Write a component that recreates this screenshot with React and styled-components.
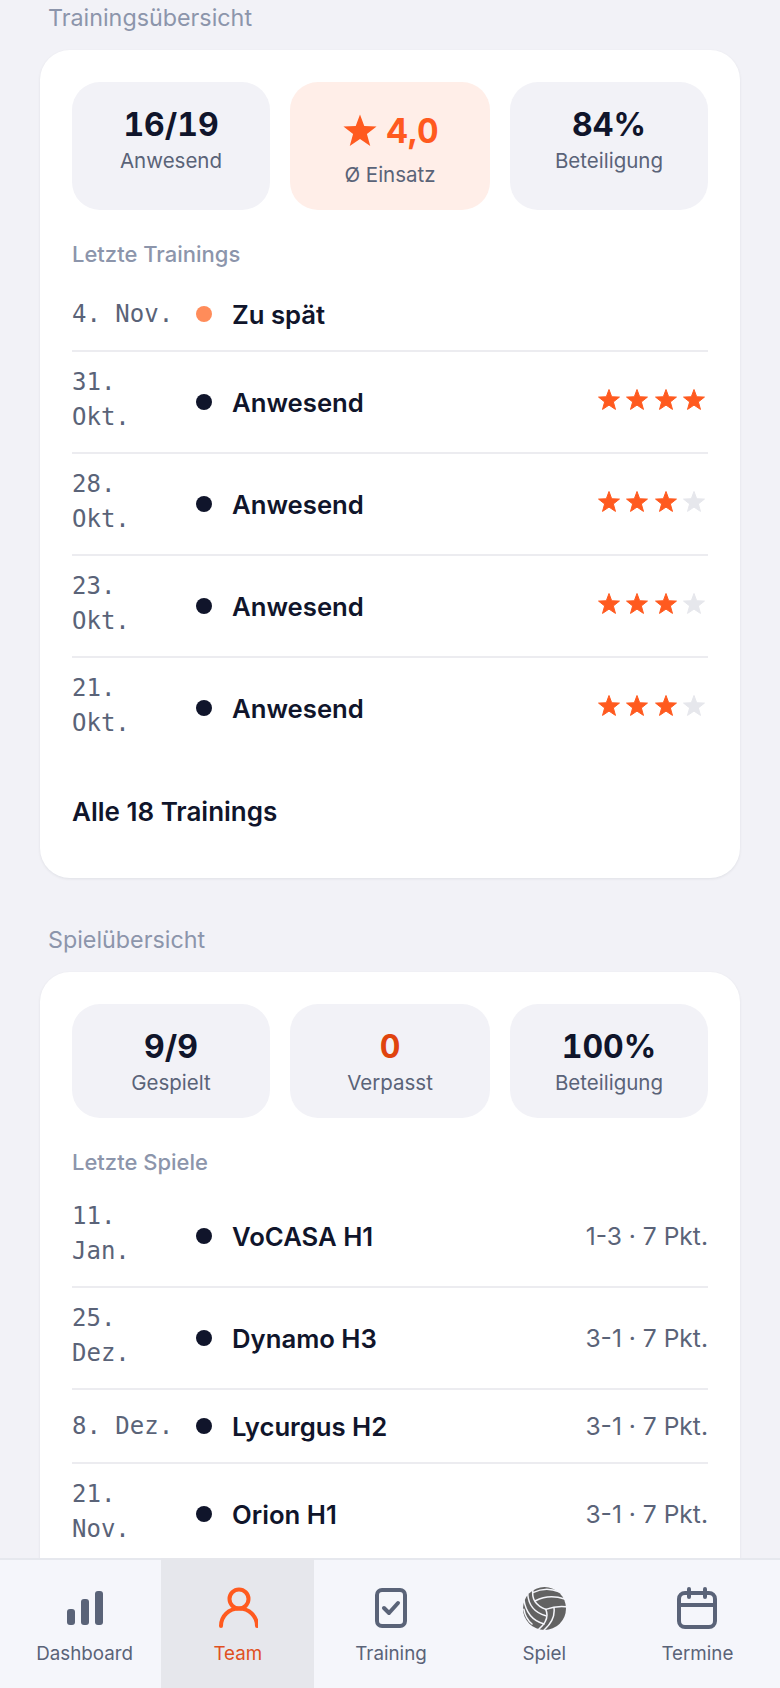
import React from 'react';
import styled, { createGlobalStyle } from 'styled-components';

const GlobalStyle = createGlobalStyle`
    html, body {
        margin: 0;
        padding: 0;
        background: #f2f2f7;
        font-family: "Inter", "Liberation Sans", sans-serif;
    }
    * { box-sizing: border-box; }
`

const Page = styled.div`
    width: 780px;
    height: 1688px;
    display: flex;
    flex-direction: column;
    overflow: hidden;
    background: #f2f2f7;
`

const Content = styled.main`
    flex: 1;
    min-height: 0;
    overflow: hidden;
    padding: 3px 40px 0;
`

const SectionTitle = styled.h2`
    margin: 0 0 17px 8px;
    font-size: 23.3px;
    line-height: 30px;
    font-weight: 400;
    color: #8c95ab;
`

const Card = styled.section`
    background: #fff;
    border-radius: 30px;
    padding: 32px;
    margin-bottom: 47px;
    box-shadow: 0 1px 3px rgba(16, 21, 43, 0.08);
`

const Stats = styled.div`
    display: grid;
    grid-template-columns: 198px 200px 198px;
    justify-content: space-between;
`

const StatBox = styled.div`
    display: flex;
    flex-direction: column;
    align-items: center;
    padding: 20px 8px;
    border-radius: 28px;
    background: ${p => (p.$accent ? '#ffeee8' : '#f2f2f7')};
`

const StatValue = styled.div`
    display: flex;
    align-items: center;
    justify-content: center;
    gap: 7px;
    height: ${p => (p.$tall ? '58px' : '44px')};
    font-size: ${p => (p.$tall ? '33.5px' : '32px')};
    font-weight: 700;
    font-variant-numeric: tabular-nums;
    color: ${p => p.$color || '#10152b'};
`

const StatLabel = styled.div`
    font-size: 20.5px;
    line-height: 30px;
    color: #5a6378;
`

const ListTitle = styled.h3`
    margin: 30px 0 10px;
    font-size: 22px;
    line-height: 28px;
    font-weight: 500;
    color: #8c95ab;
`

const Row = styled.div`
    display: flex;
    align-items: center;
    padding: 16px 0 17px;
    min-height: 74px;
    border-bottom: ${p => (p.$last ? 'none' : '2px solid #ececf0')};
`

const DateText = styled.div`
    width: 104px;
    flex-shrink: 0;
    margin-top: ${p => (p.$oneLine ? '1px' : '-3px')};
    font-family: "DejaVu Sans Mono", monospace;
    font-size: 24px;
    line-height: 35px;
    color: #5a6378;
`

const Dot = styled.span`
    width: 16px;
    height: 16px;
    margin: 0 20px;
    flex-shrink: 0;
    border-radius: 50%;
    background: ${p => p.$color};
`

const Name = styled.div`
    flex: 1;
    margin-top: 3px;
    font-size: 25.7px;
    line-height: 36px;
    font-weight: 600;
    color: #10152b;
`

const Result = styled.div`
    font-size: 24.6px;
    color: #5a6378;
`

const Stars = styled.div`
    display: flex;
    gap: 4.3px;
    margin-top: -4px;
    margin-right: 2px;
`

const AllLink = styled.a`
    display: block;
    padding: 36px 0 16px;
    font-size: 26px;
    line-height: 36px;
    font-weight: 600;
    color: #10152b;
`

const Nav = styled.nav`
    flex-shrink: 0;
    height: 130px;
    display: flex;
    padding: 0 6px;
    background: #f5f6fb;
    border-top: 2px solid #e6e8ee;
`

const NavItem = styled.div`
    flex: 1;
    display: flex;
    flex-direction: column;
    align-items: center;
    margin-top: ${p => (p.$active ? '-2px' : '0')};
    padding-top: ${p => (p.$active ? '28px' : '26px')};
    background: ${p => (p.$active ? '#e6e7ec' : 'transparent')};
    color: ${p => (p.$active ? '#e0501f' : '#5a6378')};

    &:first-child {
        padding-left: 2px;
    }
`

const NavIcon = styled.div`
    height: 44px;
    display: flex;
    align-items: center;
    justify-content: center;
`

const NavLabel = styled.span`
    margin-top: 11px;
    font-size: 18.8px;
    line-height: 26px;
`

const ORANGE = '#ff5a1f';

const STAR_POINTS = '12,1.5 14.7,8.78 22.46,9.1 16.37,13.92 18.47,21.4 12,17.1 5.53,21.4 7.63,13.92 1.54,9.1 9.3,8.78';

const StarIcon = ({ size, color, rounded }) => (
    <svg width={size} height={size} viewBox="0 0 24 24">
        <polygon points={STAR_POINTS} fill={color} stroke={rounded ? color : 'none'} strokeWidth="1" strokeLinejoin="round" />
    </svg>
);

function StarRating({ value }) {
    return (
        <Stars>
            {[1, 2, 3, 4].map(i => (
                <StarIcon key={i} size={24} rounded color={i <= value ? ORANGE : '#e6e7ec'} />
            ))}
        </Stars>
    );
}

const DashboardIcon = () => (
    <svg width="36" height="34" viewBox="0 0 36 34" fill="#5a6378">
        <rect x="0" y="18" width="8" height="16" rx="3" />
        <rect x="14" y="8" width="8" height="26" rx="3" />
        <rect x="28" y="0" width="8" height="34" rx="3" />
    </svg>
);

const TeamIcon = () => (
    <svg width="40" height="42" viewBox="-1 0 40 42" fill="none" stroke={ORANGE} strokeWidth="4" strokeLinecap="round">
        <circle cx="20" cy="12" r="9.500" />
        <path d="M2 39c0-10 8-17.500 18-17.500S38 29 38 39" />
    </svg>
);

const TrainingIcon = () => (
    <svg width="32" height="40" viewBox="0 0 32 40" fill="none" stroke="#5a6378" strokeWidth="4" strokeLinecap="round" strokeLinejoin="round">
        <rect x="2" y="2" width="28" height="36" rx="5" />
        <path d="M9 20l5 5 9-10" />
    </svg>
);

const BallIcon = () => (
    <svg width="43" height="43" viewBox="0 0 100 100" fill="none">
        <circle cx="50" cy="50" r="50" fill="#626262" />
        <g stroke="#f5f6fb" strokeWidth="3.5" strokeLinecap="round">
            <path d="M23 7Q18 38 53 52" />
            <path d="M23 13Q53 -2 84 11" />
            <path d="M29 32Q60 16 97 28" />
            <path d="M2 28Q8 74 49 86" />
            <path d="M2 52Q6 74 21 86" />
            <path d="M11 17Q14 56 53 67" />
            <path d="M53 52Q63 76 37 98" />
            <path d="M72 48Q76 76 49 100" />
            <path d="M53 52Q76 44 99 46" />
        </g>
    </svg>
);

const CalendarIcon = () => (
    <svg width="40" height="42" viewBox="0 0 40 42" fill="none" stroke="#5a6378" strokeWidth="4" strokeLinecap="round" strokeLinejoin="round">
        <rect x="2" y="6" width="36" height="34" rx="6" />
        <path d="M2 18h36M12 2v8M28 2v8" />
    </svg>
);

const trainings = [
    { date: '31. Okt.', stars: 4 },
    { date: '28. Okt.', stars: 3 },
    { date: '23. Okt.', stars: 3 },
    { date: '21. Okt.', stars: 3 },
];

const games = [
    { date: '11. Jan.', name: 'VoCASA H1', result: '1-3 · 7 Pkt.' },
    { date: '25. Dez.', name: 'Dynamo H3', result: '3-1 · 7 Pkt.' },
    { date: '8. Dez.', name: 'Lycurgus H2', result: '3-1 · 7 Pkt.', oneLine: true },
    { date: '21. Nov.', name: 'Orion H1', result: '3-1 · 7 Pkt.' },
];

const navItems = [
    { label: 'Dashboard', icon: <DashboardIcon /> },
    { label: 'Team', icon: <TeamIcon />, active: true },
    { label: 'Training', icon: <TrainingIcon /> },
    { label: 'Spiel', icon: <BallIcon /> },
    { label: 'Termine', icon: <CalendarIcon /> },
];

export default function App() {
    return (
        <Page>
            <GlobalStyle />
            <Content>
                <SectionTitle>Trainingsübersicht</SectionTitle>
                <Card>
                    <Stats>
                        <StatBox>
                            <StatValue>16/19</StatValue>
                            <StatLabel>Anwesend</StatLabel>
                        </StatBox>
                        <StatBox $accent>
                            <StatValue $tall $color={ORANGE}>
                                <StarIcon size={38} color={ORANGE} />
                                4,0
                            </StatValue>
                            <StatLabel>Ø Einsatz</StatLabel>
                        </StatBox>
                        <StatBox>
                            <StatValue>84%</StatValue>
                            <StatLabel>Beteiligung</StatLabel>
                        </StatBox>
                    </Stats>

                    <ListTitle>Letzte Trainings</ListTitle>
                    <Row>
                        <DateText $oneLine>4. Nov.</DateText>
                        <Dot $color="#ff8c5a" />
                        <Name>Zu spät</Name>
                    </Row>
                    {trainings.map((t, i) => (
                        <Row key={t.date} $last={i === trainings.length - 1}>
                            <DateText>{t.date}</DateText>
                            <Dot $color="#10152b" />
                            <Name>Anwesend</Name>
                            <StarRating value={t.stars} />
                        </Row>
                    ))}
                    <AllLink>Alle 18 Trainings</AllLink>
                </Card>

                <SectionTitle>Spielübersicht</SectionTitle>
                <Card>
                    <Stats>
                        <StatBox>
                            <StatValue>9/9</StatValue>
                            <StatLabel>Gespielt</StatLabel>
                        </StatBox>
                        <StatBox>
                            <StatValue $color="#e0440e">0</StatValue>
                            <StatLabel>Verpasst</StatLabel>
                        </StatBox>
                        <StatBox>
                            <StatValue>100%</StatValue>
                            <StatLabel>Beteiligung</StatLabel>
                        </StatBox>
                    </Stats>

                    <ListTitle>Letzte Spiele</ListTitle>
                    {games.map(g => (
                        <Row key={g.date}>
                            <DateText $oneLine={g.oneLine}>{g.date}</DateText>
                            <Dot $color="#10152b" />
                            <Name>{g.name}</Name>
                            <Result>{g.result}</Result>
                        </Row>
                    ))}
                </Card>
            </Content>
            <Nav>
                {navItems.map(item => (
                    <NavItem key={item.label} $active={item.active}>
                        <NavIcon>{item.icon}</NavIcon>
                        <NavLabel>{item.label}</NavLabel>
                    </NavItem>
                ))}
            </Nav>
        </Page>
    );
}
